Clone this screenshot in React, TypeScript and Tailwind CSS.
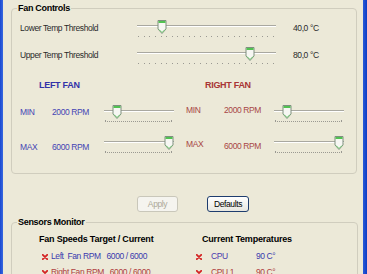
import React from "react";

function Slider({ w, cx, tickFrom, tickTo, count, dense }: { w: number; cx: number; tickFrom: number; tickTo: number; count: number; dense?: boolean }) {
  const ticks: number[] = [];
  for (let i = 0; i < count; i++) ticks.push(tickFrom + ((tickTo - tickFrom) * i) / (count - 1));
  return (
    <svg width={w} height={20} className="block shrink-0">
      <rect x={1} y={5} width={w - 2} height={1} fill="#A9A8A0" />
      <rect x={1} y={6} width={w - 2} height={1} fill="#FFFFFF" />
      {ticks.map((t, i) => {
        const end = dense && (i === 0 || i === count - 1);
        return <rect key={i} x={Math.round(t)} y={end ? 15 : 16} width={1} height={end ? 2 : 1} fill="#9A9992" />;
      })}
      <path d={`M${cx - 4} 0.5 H${cx + 4} V9 L${cx} 13.5 L${cx - 4} 9 Z`} fill="#F7F7F3" stroke="#7F8F7F" strokeWidth={1} />
      <rect x={cx - 3.5} y={1} width={7} height={2} fill="#52C252" />
      <path d={`M${cx - 3} 9.5 L${cx} 12.5 L${cx + 3} 9.5`} fill="none" stroke="#6CC86C" strokeWidth={1} />
    </svg>
  );
}

function XIcon() {
  return (
    <svg width={6} height={6} className="block shrink-0">
      <path d="M0.8 0.8 L5.2 5.2 M5.2 0.8 L0.8 5.2" stroke="#D42424" strokeWidth={1.8} strokeLinecap="round" />
    </svg>
  );
}

export default function App() {
  return (
    <div className="w-[367px] h-[274px] overflow-hidden flex bg-[#ECE9D8] font-['Liberation_Sans',Arial,sans-serif] text-[8.5px] tracking-[-0.4px] text-[#2a2a2a]">
      <div className="w-[3px] shrink-0 bg-gradient-to-r from-[#1a48d0] to-[#3868e0]" />
      <div className="flex-1 flex flex-col">
        {/* Fan Controls */}
        <div className="relative shrink-0 mt-[8px] ml-[8px] mr-[6px] h-[166px] border border-[#D0CDBE] rounded-[4px] flex flex-col">
          <div className="absolute left-[5px] -top-[6px] px-[1px] bg-[#ECE9D8] font-bold text-[9px] tracking-[-0.3px] leading-[11px] text-black">Fan Controls</div>
          <div className="flex shrink-0 items-start pl-[8px] mt-[11px] h-[20px]">
            <div className="w-[116px] mt-[3px] leading-[11px]">Lower Temp Threshold</div>
            <Slider w={141} cx={26} tickFrom={2} tickTo={137} count={25} />
            <div className="ml-[16px] mt-[3px] leading-[11px]">40,0 °C</div>
          </div>
          <div className="flex shrink-0 items-start pl-[8px] mt-[7px] h-[20px]">
            <div className="w-[116px] mt-[3px] leading-[11px]">Upper Temp Threshold</div>
            <Slider w={141} cx={114} tickFrom={2} tickTo={137} count={25} />
            <div className="ml-[16px] mt-[3px] leading-[11px]">80,0 °C</div>
          </div>
          <div className="flex shrink-0 mt-[13px]">
            {/* left fan */}
            <div className="flex flex-col pl-[8px] w-[174px] text-[#4444B4]">
              <div className="ml-[19px] h-[11px] leading-[11px] font-bold text-[9px] tracking-[-0.3px] text-[#3232A8]">LEFT FAN</div>
              <div className="flex items-start mt-[14px] h-[20px]">
                <div className="w-[32px] mt-[2px] leading-[11px]">MIN</div>
                <div className="w-[51px] mt-[2px] leading-[11px]">2000 RPM</div>
                <Slider w={72} cx={14} tickFrom={2} tickTo={68} count={34} dense />
              </div>
              <div className="flex items-start mt-[11px] h-[20px]">
                <div className="w-[32px] mt-[6px] leading-[11px]">MAX</div>
                <div className="w-[51px] mt-[6px] leading-[11px]">6000 RPM</div>
                <Slider w={72} cx={66} tickFrom={2} tickTo={68} count={34} dense />
              </div>
            </div>
            {/* right fan */}
            <div className="flex flex-col text-[#A84646]">
              <div className="ml-[19px] h-[11px] leading-[11px] font-bold text-[9px] tracking-[-0.3px] text-[#A83434]">RIGHT FAN</div>
              <div className="flex items-start mt-[14px] h-[20px]">
                <div className="w-[38px] mt-[0px] leading-[11px]">MIN</div>
                <div className="w-[49px] mt-[0px] leading-[11px]">2000 RPM</div>
                <Slider w={72} cx={14} tickFrom={2} tickTo={68} count={34} dense />
              </div>
              <div className="flex items-start mt-[11px] h-[20px]">
                <div className="w-[38px] mt-[3px] leading-[11px]">MAX</div>
                <div className="w-[49px] mt-[5px] leading-[11px]">6000 RPM</div>
                <Slider w={72} cx={66} tickFrom={2} tickTo={68} count={34} dense />
              </div>
            </div>
          </div>
        </div>
        {/* Buttons */}
        <div className="flex shrink-0 items-start mt-[22px] ml-[134px] gap-[29px]">
          <div className="w-[41px] h-[16px] border border-[#C9C7BA] rounded-[3px] bg-[#F5F4EF] text-[#ACA899] flex items-center justify-center leading-none">Apply</div>
          <div className="w-[42px] h-[16px] border border-[#1E3D6E] rounded-[3px] bg-gradient-to-b from-[#FFFFFF] to-[#E8E7E0] text-black flex items-center justify-center leading-none">Defaults</div>
        </div>
        {/* Sensors Monitor */}
        <div className="relative shrink-0 mt-[10px] ml-[8px] mr-[5px] h-[80px] border border-[#D0CDBE] rounded-[4px] flex">
          <div className="absolute left-[5px] -top-[6px] px-[1px] bg-[#ECE9D8] font-bold text-[9px] tracking-[-0.3px] leading-[11px] text-black">Sensors Monitor</div>
          <div className="flex flex-col pl-[27px] pt-[11px] w-[184px]">
            <div className="font-bold text-[9px] tracking-[-0.2px] leading-[11px] text-black">Fan Speeds Target / Current</div>
            <div className="flex items-center ml-[3px] mt-[6px] h-[11px] text-[#3A3AAE]">
              <XIcon />
              <span className="ml-[3px] leading-[11px] whitespace-pre">Left  Fan RPM   6000 / 6000</span>
            </div>
            <div className="flex items-center ml-[3px] mt-[5px] h-[11px] text-[#B04040]">
              <XIcon />
              <span className="ml-[3px] leading-[11px] whitespace-pre">Right Fan RPM   6000 / 6000</span>
            </div>
          </div>
          <div className="flex flex-col pt-[11px]">
            <div className="ml-[6px] font-bold text-[9px] tracking-[-0.2px] leading-[11px] text-black">Current Temperatures</div>
            <div className="flex items-center mt-[6px] h-[11px]">
              <XIcon />
              <span className="ml-[9px] w-[45px] leading-[11px] text-[#4A3AAE]">CPU</span>
              <span className="leading-[11px] text-[#3A3AAE]">90 C°</span>
            </div>
            <div className="flex items-center mt-[5px] h-[11px] text-[#B04040]">
              <XIcon />
              <span className="ml-[9px] w-[45px] leading-[11px]">CPU 1</span>
              <span className="leading-[11px]">90 C°</span>
            </div>
          </div>
        </div>
      </div>
      <div className="w-[4px] shrink-0 bg-gradient-to-r from-[#2a5ad8] to-[#0c3cc4]" />
    </div>
  );
}
